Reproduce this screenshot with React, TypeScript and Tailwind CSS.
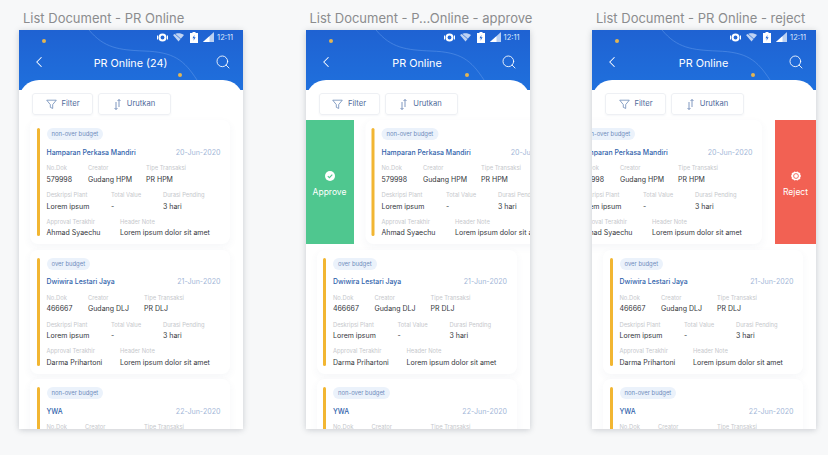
import { ChevronLeft, Search } from "lucide-react";

type Doc = {
  badge: string;
  company: string;
  date: string;
  noDok: string;
  creator: string;
  tipe: string;
  approval: string;
  firstRow: string;
};

const docs: Doc[] = [
  {
    badge: "non-over budget",
    company: "Hamparan Perkasa Mandiri",
    date: "20-Jun-2020",
    noDok: "579998",
    creator: "Gudang HPM",
    tipe: "PR HPM",
    approval: "Ahmad Syaechu",
    firstRow: "grid-cols-[41.5px_58px_auto]",
  },
  {
    badge: "over budget",
    company: "Dwiwira Lestari Jaya",
    date: "21-Jun-2020",
    noDok: "466667",
    creator: "Gudang DLJ",
    tipe: "PR DLJ",
    approval: "Darma Prihartoni",
    firstRow: "grid-cols-[41.5px_56px_auto]",
  },
  {
    badge: "non-over budget",
    company: "YWA",
    date: "22-Jun-2020",
    noDok: "466667",
    creator: "Gudang YWA",
    tipe: "PR YWA",
    approval: "Darma Prihartoni",
    firstRow: "grid-cols-[38.5px_59px_auto]",
  },
];

function Field({ label, value }: { label: string; value: string }) {
  return (
    <div className="whitespace-nowrap">
      <div className="h-2 text-[5.8px] leading-[8px] text-[#c6c8cc]">{label}</div>
      <div className="mt-[2.5px] h-[10px] text-[7px] leading-[10px] text-[#33363b]">{value}</div>
    </div>
  );
}

function DocCard({ doc, className = "" }: { doc: Doc; className?: string }) {
  return (
    <div className={`flex h-[124px] w-[200px] shrink-0 rounded-lg bg-white py-2 pl-[6.5px] shadow-[0_3px_8px_rgba(60,80,120,0.05)] ${className}`}>
      <div className="w-[3px] shrink-0 rounded-sm bg-[#f2b632]" />
      <div className="ml-[7px] w-[174px]">
        <span className="block h-3 w-fit rounded-full bg-[#ebf2fb] px-[5px] text-[5.9px] leading-3 text-[#6f8cbc]">
          {doc.badge}
        </span>
        <div className="mt-[7.5px] flex h-[10px] items-center justify-between leading-[10px]">
          <span className="text-[6.9px] font-medium text-[#2f62ab]">{doc.company}</span>
          <span className="text-[7.1px] text-[#a3b7d8]">{doc.date}</span>
        </div>
        <div className={`mt-[6.5px] grid ${doc.firstRow}`}>
          <Field label="No.Dok" value={doc.noDok} />
          <Field label="Creator" value={doc.creator} />
          <Field label="Tipe Transaksi" value={doc.tipe} />
        </div>
        <div className="mt-[6.5px] grid grid-cols-[64.5px_52px_auto]">
          <Field label="Deskripsi Plant" value="Lorem ipsum" />
          <Field label="Total Value" value="-" />
          <Field label="Durasi Pending" value="3 hari" />
        </div>
        <div className="mt-[6px] grid grid-cols-[73.5px_auto]">
          <Field label="Approval Terakhir" value={doc.approval} />
          <Field label="Header Note" value="Lorem ipsum dolor sit amet" />
        </div>
      </div>
    </div>
  );
}

function StatusIcons() {
  return (
    <div className="flex h-[14px] items-center justify-end pr-[10px] text-white">
      <svg width="11" height="9" viewBox="0 0 11 9" className="mr-[5px]">
        <circle cx="5.5" cy="4.5" r="4" fill="white" />
        <circle cx="5.5" cy="4.5" r="1.9" fill="#2066d6" />
        <path d="M0.5 2.5v4M10.5 2.5v4" stroke="white" strokeWidth="1" />
      </svg>
      <svg width="11" height="9" viewBox="0 0 11 9" className="mr-[6px]">
        <path d="M0 2C3.2 -0.4 7.8 -0.4 11 2L5.5 8.5Z" fill="white" fillOpacity="0.72" />
        <path d="M1.5 0.5L9.5 7.5" stroke="#2066d6" strokeWidth="0.7" />
      </svg>
      <svg width="8" height="11" viewBox="0 0 8 11" className="mr-[5px]">
        <path d="M2.5 0h3v1H8v10H0V1h2.5Z" fill="white" />
        <path d="M4.4 3L2.5 6.2h1.4L3.5 8.7l2.1-3.5H4.2Z" fill="#2066d6" />
      </svg>
      <svg width="11" height="10" viewBox="0 0 11 10" className="mr-[3px]">
        <path d="M11 0V10H0Z" fill="white" fillOpacity="0.7" />
        <path d="M6.5 4.2V10H0Z" fill="white" />
      </svg>
      <span className="pt-[1px] text-[7.5px] leading-[8px] text-[#dce9fb]">12:11</span>
    </div>
  );
}

function Phone({
  title,
  heading,
  swipe,
}: {
  title: string;
  heading: string;
  swipe?: "approve" | "reject";
}) {
  return (
    <div className="w-[224px] shrink-0">
      <div className="ml-1 h-5 whitespace-nowrap text-[13px] leading-[17px] text-[#8b8c8e]">{title}</div>
      <div className="h-[399px] overflow-hidden bg-white shadow-[0_1px_6px_rgba(40,50,70,0.22)]">
        <div className="relative h-[60px] bg-gradient-to-b from-[#1f62d2] to-[#1f70dd]">
          <svg width="224" height="60" viewBox="0 0 224 60" fill="none" className="absolute inset-0">
            <path d="M70 0C85 18 100 20 125 21C155 22 165 30 178 50" stroke="#5a93e8" strokeWidth="0.6" />
            <circle cx="25" cy="11" r="2" fill="#e3b552" />
            <circle cx="161" cy="45" r="2" fill="#e3b552" />
          </svg>
          <div className="relative">
            <StatusIcons />
            <div className="mt-1 flex h-7 items-center justify-between pl-[11px] pr-[12px] text-white">
              <ChevronLeft size={18} strokeWidth={1.4} />
              <span className="pt-[4px] text-[10.8px]">{heading}</span>
              <div className="flex w-[18px] justify-end">
                <Search size={16} strokeWidth={1.3} />
              </div>
            </div>
          </div>
        </div>
        <div className="relative -mt-[10px] h-[349px] overflow-hidden rounded-t-[20px] bg-white">
          <div className="flex gap-[5px] pl-[13px] pt-[13px] text-[7.6px] text-[#4f6b9b]">
            <div className="flex h-[22px] w-[61px] items-center justify-center gap-[5px] rounded-[3px] border border-[#eef0f4] shadow-[0_1px_2px_rgba(60,80,120,0.05)]">
              <svg width="11" height="11" viewBox="0 0 12 11" fill="none" stroke="#5f7fb0" strokeWidth="0.8" strokeLinejoin="round">
                <path d="M0.8 0.8H11.2L7.3 5.6V9.8L4.7 8.6V5.6Z" />
              </svg>
              Filter
            </div>
            <div className="flex h-[22px] w-[73px] items-center justify-center gap-[6px] rounded-[3px] border border-[#eef0f4] shadow-[0_1px_2px_rgba(60,80,120,0.05)]">
              <svg width="7" height="11" viewBox="0 0 7 11" fill="none" stroke="#5f7fb0" strokeWidth="0.8">
                <path d="M2 3V10.5M0.5 9L2 10.5L3.5 9M5 8V0.5M3.5 2L5 0.5L6.5 2" />
              </svg>
              Urutkan
            </div>
          </div>
          <div className="mt-[5px] flex flex-col gap-[5.5px]">
            {docs.map((doc, i) => {
              const active = i === 0 ? swipe : undefined;
              return (
                <div key={doc.company} className="relative flex h-[124px] pl-[11px]">
                  {active === "approve" && (
                    <div className="absolute bottom-0 left-0 top-0 flex w-[48px] flex-col items-center justify-center gap-[5px] bg-[#4fc78f] pt-[6px] text-[8.5px] text-white">
                      <svg width="10" height="10" viewBox="0 0 10 10">
                        <circle cx="5" cy="5" r="5" fill="white" />
                        <path d="M2.8 5.1L4.4 6.7L7.3 3.6" fill="none" stroke="#4fc78f" strokeWidth="1.1" />
                      </svg>
                      Approve
                    </div>
                  )}
                  {active === "reject" && (
                    <div className="absolute bottom-0 right-0 top-0 flex w-[41px] flex-col items-center justify-center gap-[5px] bg-[#f26153] pt-[6px] text-[8.5px] text-white">
                      <svg width="10" height="10" viewBox="0 0 10 10">
                        <path d="M3.4 0.4L5 1L6.6 0.4L7.6 1.6L9.2 1.9L9.2 3.6L10 5L9.2 6.4L9.2 8.1L7.6 8.4L6.6 9.6L5 9L3.4 9.6L2.4 8.4L0.8 8.1L0.8 6.4L0 5L0.8 3.6L0.8 1.9L2.4 1.6Z" fill="white" />
                        <circle cx="5" cy="5" r="2.4" fill="none" stroke="#f26153" strokeWidth="0.9" />
                      </svg>
                      Reject
                    </div>
                  )}
                  <DocCard
                    doc={doc}
                    className={
                      active === "approve"
                        ? "translate-x-[48.5px]"
                        : active === "reject"
                          ? "-translate-x-[41px]"
                          : ""
                    }
                  />
                </div>
              );
            })}
          </div>
        </div>
      </div>
    </div>
  );
}

export default function App() {
  return (
    <div className="flex h-[455px] w-[828px] gap-[62.5px] overflow-hidden bg-[#f7f8f9] pl-[19px] pt-[10px] font-['Inter',sans-serif]">
      <Phone title="List Document - PR Online" heading="PR Online (24)" />
      <Phone title="List Document - P...Online - approve" heading="PR Online" swipe="approve" />
      <Phone title="List Document - PR Online - reject" heading="PR Online" swipe="reject" />
    </div>
  );
}
